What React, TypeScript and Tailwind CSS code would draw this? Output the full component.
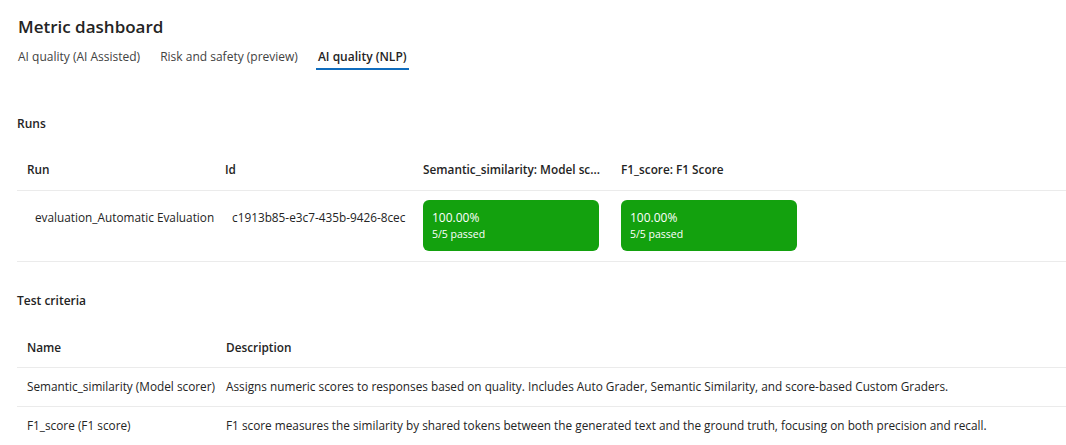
const tabs = [
  { label: 'AI quality (AI Assisted)', active: false },
  { label: 'Risk and safety (preview)', active: false },
  { label: 'AI quality (NLP)', active: true },
]

const runColumns = ['Run', 'Id', 'Semantic_similarity: Model sc...', 'F1_score: F1 Score']

const runs = [
  {
    name: 'evaluation_Automatic Evaluation',
    id: 'c1913b85-e3c7-435b-9426-8cec',
    scores: [
      { pct: '100.00%', passed: '5/5 passed' },
      { pct: '100.00%', passed: '5/5 passed' },
    ],
  },
]

const criteria = [
  {
    name: 'Semantic_similarity (Model scorer)',
    description:
      'Assigns numeric scores to responses based on quality. Includes Auto Grader, Semantic Similarity, and score-based Custom Graders.',
  },
  {
    name: 'F1_score (F1 score)',
    description:
      'F1 score measures the similarity by shared tokens between the generated text and the ground truth, focusing on both precision and recall.',
  },
]

function ScoreCard({ pct, passed }: { pct: string; passed: string }) {
  return (
    <div className="flex h-[51px] w-[176px] flex-col justify-center rounded-[6px] bg-[#13a10e] pl-[9px] text-white">
      <span className="text-[12px] leading-[17px]">{pct}</span>
      <span className="text-[10.5px] leading-[17px]">{passed}</span>
    </div>
  )
}

export default function App() {
  return (
    <div
      className="min-h-[445px] bg-white text-[12px] text-[#242424]"
      style={{ fontFamily: '"Open Sans", "Noto Sans", sans-serif' }}
    >
      <div className="pl-[18px] pt-[14px]">
        <h1 className="text-[17px] font-semibold leading-[26px]">Metric dashboard</h1>
      </div>

      <div className="flex gap-[16px] pl-[16px] pt-[4px]">
        {tabs.map((t) => (
          <div
            key={t.label}
            className={
              t.active
                ? 'border-b-2 border-[#0f6cbd] px-[2px] pb-[2px] pt-[4px] font-semibold text-[#242424]'
                : 'border-b-2 border-transparent px-[2px] pb-[2px] pt-[4px] text-[#424242]'
            }
          >
            <span className="leading-[16px]">{t.label}</span>
          </div>
        ))}
      </div>

      <section className="pl-[17px] pt-[45px] text-[11.8px]">
        <h2 className="text-[12px] font-semibold leading-[17px]">Runs</h2>
        <div className="mt-[18px]">
          <div className="flex h-[41px] items-center border-b border-[#ebebeb]">
            {runColumns.map((c) => (
              <div key={c} className="w-[198px] overflow-hidden whitespace-nowrap px-[10px] font-semibold">
                {c}
              </div>
            ))}
          </div>
          {runs.map((r) => (
            <div key={r.id} className="flex h-[71px] items-start border-b border-[#ebebeb] pt-[9px]">
              <div className="w-[198px] overflow-hidden whitespace-nowrap pl-[18px] pt-[9px] leading-[17px]">
                {r.name}
              </div>
              <div className="w-[198px] overflow-hidden whitespace-nowrap pl-[17px] pt-[9px] leading-[17px]">
                {r.id}
              </div>
              {r.scores.map((s, i) => (
                <div key={i} className="w-[198px] px-[10px]">
                  <ScoreCard pct={s.pct} passed={s.passed} />
                </div>
              ))}
            </div>
          ))}
        </div>
      </section>

      <section className="pl-[17px] pt-[30px] text-[11.8px]">
        <h2 className="text-[12px] font-semibold leading-[17px]">Test criteria</h2>
        <div className="mt-[20px]">
          <div className="flex h-[39px] items-center border-b border-[#ebebeb]">
            <div className="w-[199px] px-[10px] font-semibold">Name</div>
            <div className="flex-1 px-[10px] font-semibold">Description</div>
          </div>
          {criteria.map((c) => (
            <div key={c.name} className="flex h-[39px] items-center border-b border-[#ebebeb]">
              <div className="w-[199px] overflow-hidden whitespace-nowrap pl-[10px]">{c.name}</div>
              <div className="flex-1 whitespace-nowrap px-[10px]">{c.description}</div>
            </div>
          ))}
        </div>
      </section>
    </div>
  )
}
